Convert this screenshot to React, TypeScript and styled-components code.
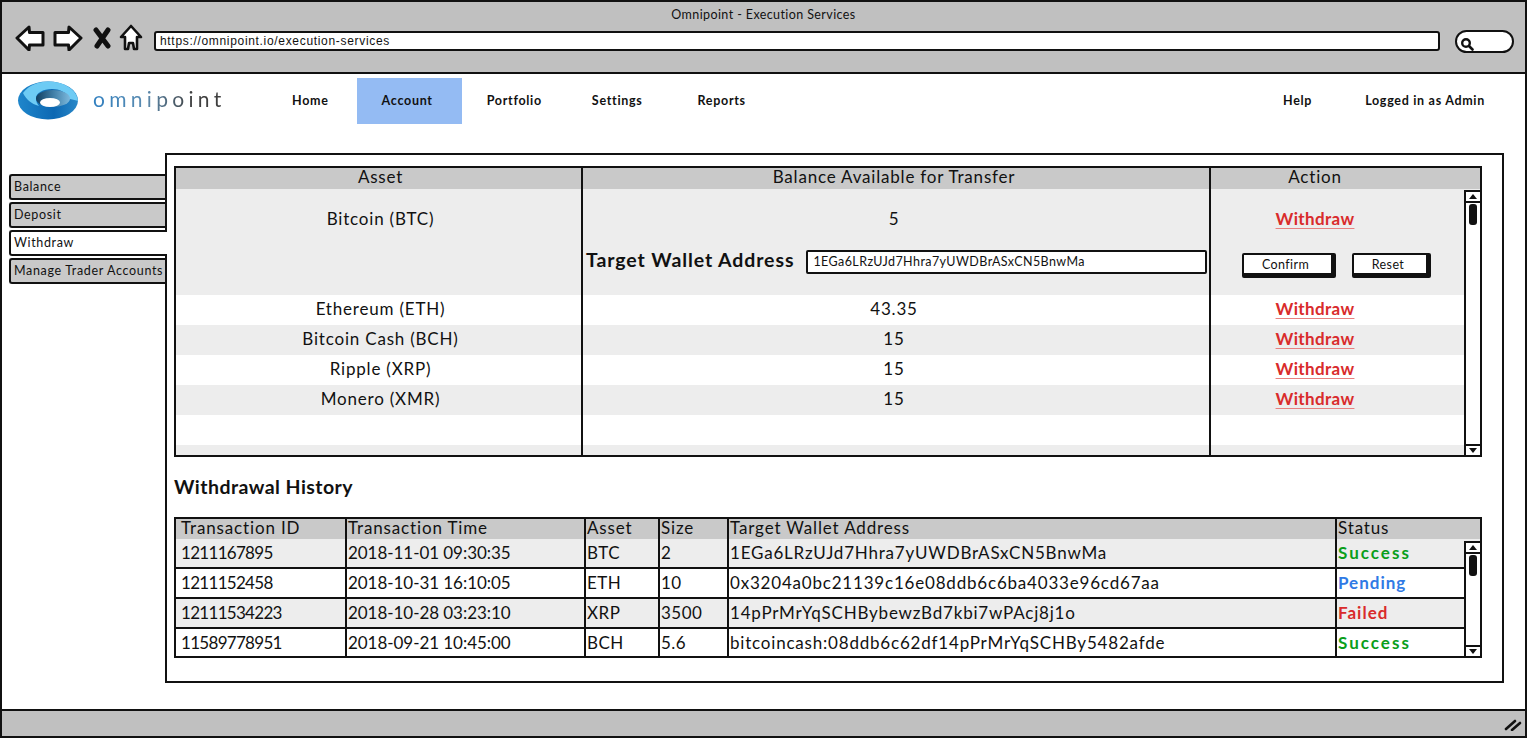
import styled, { createGlobalStyle } from "styled-components";

const GlobalStyle = createGlobalStyle`
  html, body {
    margin: 0;
    padding: 0;
    background: #fff;
    overflow: hidden;
  }
  * {
    box-sizing: border-box;
  }
`;

const font = `Lato, "Open Sans", sans-serif`;

const Frame = styled.div`
  width: 1527px;
  height: 738px;
  border: 2px solid #111;
  display: flex;
  flex-direction: column;
  font-family: ${font};
  color: #111;
  background: #fff;
`;

const Chrome = styled.header`
  height: 72px;
  flex: none;
  background: #c0c0c0;
  border-bottom: 2px solid #111;
  display: flex;
  flex-direction: column;
`;

const WindowTitle = styled.div`
  height: 24px;
  padding-top: 5px;
  text-align: center;
  font-size: 12.5px;
  line-height: 16px;
  letter-spacing: 0.4px;
`;

const Toolbar = styled.div`
  display: flex;
  align-items: center;
  padding: 2px 11px 0 13px;
  height: 28px;
`;

const IconSlot = styled.svg<{ $gap: number }>`
  flex: none;
  margin-right: ${(p) => p.$gap}px;
  margin-bottom: 6px;
  display: block;
`;

const UrlBar = styled.div`
  width: 1286px;
  height: 20px;
  margin-right: 15px;
  background: #fff;
  border: 2px solid #111;
  border-radius: 3px;
  padding-left: 4px;
  font-family: "Liberation Sans", Arial, sans-serif;
  font-size: 12px;
  line-height: 16px;
  letter-spacing: 0.68px;
`;

const SearchPill = styled.div`
  width: 59px;
  height: 23px;
  background: #fff;
  border: 2px solid #111;
  border-radius: 12px;
  padding: 3px 0 0 3px;
`;

const Nav = styled.nav`
  height: 46px;
  margin-top: 4px;
  flex: none;
  display: flex;
  align-items: center;
  padding-left: 15px;
  padding-right: 15px;
`;

const Logo = styled.div`
  display: flex;
  align-items: center;
  width: 250px;
  gap: 12px;
`;

const LogoText = styled.span`
  font-size: 21px;
  font-weight: 400;
  letter-spacing: 4.3px;
  margin-top: -6px;
  background: linear-gradient(90deg, #2f7fc0, #5d8cb0 40%, #3f3f3f 75%);
  -webkit-background-clip: text;
  background-clip: text;
  color: transparent;
`;

const NavItem = styled.a<{ $active?: boolean; $after: number }>`
  height: 46px;
  padding: 0 ${(p) => (p.$active ? 29 : 25)}px 1px 25px;
  display: flex;
  align-items: center;
  font-size: 12.5px;
  font-weight: 700;
  letter-spacing: 0.7px;
  background: ${(p) => (p.$active ? "#94bbf3" : "transparent")};
  margin-right: ${(p) => p.$after}px;
`;

const NavRight = styled.div`
  margin-left: auto;
  display: flex;
  align-items: center;
  gap: 53px;
  padding: 0 25px 1px 0;
  font-size: 12.5px;
  font-weight: 700;
  letter-spacing: 0.7px;
`;

const Workspace = styled.main`
  flex: 1;
  display: flex;
  padding: 29px 22px 26px 7px;
`;

const Sidebar = styled.aside`
  width: 158px;
  flex: none;
  margin-top: 21px;
  display: flex;
  flex-direction: column;
  gap: 2px;
`;

const SideTab = styled.div<{ $active?: boolean }>`
  height: 26px;
  padding-left: 3px;
  border: 2px solid #111;
  border-radius: 3px 0 0 3px;
  border-right: none;
  background: ${(p) => (p.$active ? "#fff" : "#c9c9c9")};
  font-size: 12.5px;
  line-height: 22px;
  letter-spacing: 0.65px;
  white-space: nowrap;
  position: relative;
  z-index: ${(p) => (p.$active ? 2 : 0)};
`;

const Panel = styled.section`
  flex: 1;
  margin-left: -2px;
  border: 2px solid #111;
  background: #fff;
  padding: 11px 20px 0 7px;
  position: relative;
  z-index: 1;
`;

const TableFrame = styled.div<{ $height: number }>`
  position: relative;
  height: ${(p) => p.$height}px;
  border: 2px solid #111;
  overflow: hidden;
`;

const Table = styled.table`
  width: 100%;
  table-layout: fixed;
  border-collapse: separate;
  border-spacing: 0;
`;

const AssetHead = styled.th`
  height: 21px;
  padding: 0 0 4px;
  background: #c9c9c9;
  font-size: 17px;
  font-weight: 400;
  line-height: 16px;
  letter-spacing: 0.8px;
  text-align: center;
  & + & {
    border-left: 2px solid #111;
  }
  &:first-child {
    padding-left: 4px;
  }
  &:nth-child(2) {
    padding-right: 4px;
  }
  &:last-child {
    padding-right: 61px;
  }
`;

const AssetCell = styled.td<{ $height: number; $shade: boolean }>`
  height: ${(p) => p.$height}px;
  padding: 0 0 ${(p) => (p.$height === 30 ? 4 : 2)}px;
  background: ${(p) => (p.$shade ? "#ededed" : "#fff")};
  font-size: 17px;
  letter-spacing: 0.8px;
  text-align: center;
  vertical-align: middle;
  & + & {
    border-left: 2px solid #111;
  }
  &:first-child {
    padding-left: 4px;
  }
  &:nth-child(2) {
    padding-right: 4px;
  }
  &:last-child {
    padding-right: 61px;
  }
`;

const Withdraw = styled.a`
  color: #d92b2b;
  font-size: 17px;
  font-weight: 700;
  letter-spacing: 0.35px;
  text-decoration: underline;
  text-decoration-color: #e78080;
  text-underline-offset: 3px;
`;

const WalletRow = styled.div`
  display: flex;
  align-items: center;
  gap: 12px;
  margin-right: -4px;
  padding: 0 2px 18px 3px;
`;

const WalletLabel = styled.label`
  font-size: 19.5px;
  font-weight: 700;
  line-height: 20px;
  letter-spacing: 0.9px;
  white-space: nowrap;
  margin-bottom: 4px;
`;

const WalletInput = styled.div`
  flex: 1;
  height: 24px;
  background: #fff;
  border: 2px solid #111;
  border-radius: 2px;
  padding-left: 5px;
  font-size: 12.5px;
  line-height: 19px;
  letter-spacing: 0.42px;
  text-align: left;
`;

const ButtonRow = styled.div`
  display: flex;
  gap: 16px;
  padding: 0 0 11px 31px;
`;

const ActionButton = styled.button<{ $width: number }>`
  flex: none;
  width: ${(p) => p.$width}px;
  height: 25px;
  padding: 0 4px 0 0;
  background: #fff;
  border: 2px solid #111;
  border-width: 2px 5px 5px 2px;
  border-radius: 2px;
  font-family: ${font};
  font-size: 12.5px;
  letter-spacing: 0.4px;
  color: #111;
`;

const Scrollbar = styled.div<{ $top: number }>`
  position: absolute;
  top: ${(p) => p.$top}px;
  right: 0;
  bottom: 0;
  width: 16px;
  background: #fff;
  border: 2px solid #111;
  border-right: none;
  border-bottom: none;
  display: flex;
  flex-direction: column;
`;

const ScrollArrow = styled.div<{ $down?: boolean }>`
  height: 11px;
  flex: none;
  display: flex;
  align-items: center;
  justify-content: center;
  border-${(p) => (p.$down ? "top" : "bottom")}: 2px solid #111;
  margin-${(p) => (p.$down ? "top" : "bottom")}: ${(p) => (p.$down ? "auto" : "1px")};
  &::before {
    content: "";
    border-left: 4px solid transparent;
    border-right: 4px solid transparent;
    border-${(p) => (p.$down ? "top" : "bottom")}: 5px solid #111;
  }
`;

const ScrollThumb = styled.div`
  width: 8px;
  height: 21px;
  margin-left: 3px;
  background: #111;
  border-radius: 3px;
`;

const HistoryTitle = styled.h2`
  margin: 18px 0 18px;
  font-size: 19.5px;
  font-weight: 700;
  line-height: 24px;
  letter-spacing: 0.45px;
`;

const HistoryHead = styled.th`
  height: 20px;
  padding: 0 0 4px 5px;
  background: #c9c9c9;
  font-size: 17px;
  font-weight: 400;
  line-height: 15px;
  letter-spacing: 0.85px;
  text-align: left;
  white-space: nowrap;
  & + & {
    border-left: 2px solid #111;
    padding-left: 1px;
  }
`;

const HistoryCell = styled.td<{ $shade: boolean; $last: boolean; $spacing: number }>`
  height: ${(p) => (p.$last ? 27 : 30)}px;
  padding: 0 0 ${(p) => (p.$last ? 0 : 2)}px 5px;
  background: ${(p) => (p.$shade ? "#ededed" : "#fff")};
  border-bottom: ${(p) => (p.$last ? "none" : "2px solid #111")};
  font-size: 17px;
  letter-spacing: ${(p) => p.$spacing}px;
  white-space: nowrap;
  overflow: hidden;
  & + & {
    border-left: 2px solid #111;
    padding-left: 1px;
  }
`;

const Status = styled.span<{ $color: string; $spacing: number }>`
  color: ${(p) => p.$color};
  font-weight: 700;
  letter-spacing: ${(p) => p.$spacing}px;
`;

const BottomBar = styled.footer`
  height: 27px;
  flex: none;
  background: #c0c0c0;
  border-top: 2px solid #111;
  display: flex;
  justify-content: flex-end;
  align-items: center;
  padding-right: 3px;
`;

const statusStyles: Record<string, { color: string; spacing: number }> = {
  Success: { color: "#0a9e1b", spacing: 2 },
  Pending: { color: "#2f7ae5", spacing: 1 },
  Failed: { color: "#d92b2b", spacing: 1 }
};

const assets = [
  { name: "Ethereum (ETH)", balance: "43.35" },
  { name: "Bitcoin Cash (BCH)", balance: "15" },
  { name: "Ripple (XRP)", balance: "15" },
  { name: "Monero (XMR)", balance: "15" }
];

const history = [
  ["1211167895", "2018-11-01 09:30:35", "BTC", "2", "1EGa6LRzUJd7Hhra7yUWDBrASxCN5BnwMa", "Success"],
  ["1211152458", "2018-10-31 16:10:05", "ETH", "10", "0x3204a0bc21139c16e08ddb6c6ba4033e96cd67aa", "Pending"],
  ["12111534223", "2018-10-28 03:23:10", "XRP", "3500", "14pPrMrYqSCHBybewzBd7kbi7wPAcj8j1o", "Failed"],
  ["11589778951", "2018-09-21 10:45:00", "BCH", "5.6", "bitcoincash:08ddb6c62df14pPrMrYqSCHBy5482afde", "Success"]
];

const historyColumns = [
  { label: "Transaction ID", width: 169, spacing: -0.7 },
  { label: "Transaction Time", width: 239, spacing: -0.05 },
  { label: "Asset", width: 74, spacing: 0.5 },
  { label: "Size", width: 69, spacing: 0.5 },
  { label: "Target Wallet Address", width: 608, spacing: 0.8 },
  { label: "Status", width: 145, spacing: 1 }
];

function ScrollBar({ top }: { top: number }) {
  return (
    <Scrollbar $top={top}>
      <ScrollArrow />
      <ScrollThumb />
      <ScrollArrow $down />
    </Scrollbar>
  );
}

function App() {
  return (
    <>
      <GlobalStyle />
      <Frame>
        <Chrome>
          <WindowTitle>Omnipoint - Execution Services</WindowTitle>
          <Toolbar>
            <IconSlot $gap={8} width="30" height="26" viewBox="0 0 30 26">
              <path d="M2 13 L14 2 L14.500 7.500 L28 7.500 L28 20 L14.500 20 L14 25 Z" fill="#fff" stroke="#111" strokeWidth="3" strokeLinejoin="round" />
            </IconSlot>
            <IconSlot $gap={10} width="30" height="26" viewBox="0 0 30 26">
              <path d="M28 13 L16 2 L15.500 7.500 L2 7.500 L2 20 L15.500 20 L16 25 Z" fill="#fff" stroke="#111" strokeWidth="3" strokeLinejoin="round" />
            </IconSlot>
            <IconSlot $gap={7} width="19" height="22" viewBox="0 0 19 22">
              <path d="M3 3 L15 19 M15 3 L4 19" fill="none" stroke="#111" strokeWidth="5" strokeLinecap="round" />
            </IconSlot>
            <IconSlot $gap={11} width="24" height="28" viewBox="0 0 24 28">
              <path d="M12 2 L22 13 L18 13 L18 25 L15 25 L14 19 L10 19 L9 25 L6 25 L6 13 L2 13 Z" fill="#fff" stroke="#111" strokeWidth="2.6" strokeLinejoin="round" />
            </IconSlot>
            <UrlBar>https://omnipoint.io/execution-services</UrlBar>
            <SearchPill>
              <svg width="14" height="14" viewBox="0 0 14 14">
                <circle cx="6" cy="6" r="3.8" fill="none" stroke="#111" strokeWidth="2.4" />
                <path d="M9 9 L12.5 12.5" stroke="#111" strokeWidth="2.6" strokeLinecap="round" />
              </svg>
            </SearchPill>
          </Toolbar>
        </Chrome>
        <Nav>
          <Logo>
            <svg width="64" height="40" viewBox="0 0 64 40">
              <defs>
                <linearGradient id="ringBody" x1="0" y1="0" x2="1" y2="0">
                  <stop offset="0" stopColor="#1f86cb" />
                  <stop offset="0.6" stopColor="#0c68b3" />
                  <stop offset="1" stopColor="#2a88c8" />
                </linearGradient>
                <linearGradient id="ringHole" x1="0" y1="0" x2="1" y2="0">
                  <stop offset="0" stopColor="#123f61" />
                  <stop offset="0.5" stopColor="#3f7da6" />
                  <stop offset="1" stopColor="#7db9dd" />
                </linearGradient>
              </defs>
              <ellipse cx="31" cy="19.5" rx="30" ry="19" fill="url(#ringBody)" />
              <path d="M6 12 C12 4 22 0.500 31 0.500 C48 0.500 60 9 61 20 C59 19 56 19 53 18 C50 11 42 8 35 8 C26 8 19 12 19 17 C19 20 20 23 22 25 C14 23 9 18 6 12 Z" fill="#6ecbf4" />
              <ellipse cx="36" cy="17.500" rx="17" ry="8.500" fill="url(#ringHole)" />
              <ellipse cx="33" cy="21.500" rx="10" ry="4.500" fill="#fff" />
            </svg>
            <LogoText>omnipoint</LogoText>
          </Logo>
          <NavItem $after={3}>Home</NavItem>
          <NavItem $active $after={0}>Account</NavItem>
          <NavItem $after={0}>Portfolio</NavItem>
          <NavItem $after={5}>Settings</NavItem>
          <NavItem $after={0}>Reports</NavItem>
          <NavRight>
            <span>Help</span>
            <span>Logged in as Admin</span>
          </NavRight>
        </Nav>
        <Workspace>
          <Sidebar>
            <SideTab>Balance</SideTab>
            <SideTab>Deposit</SideTab>
            <SideTab $active>Withdraw</SideTab>
            <SideTab>Manage Trader Accounts</SideTab>
          </Sidebar>
          <Panel>
            <TableFrame $height={291}>
              <Table>
                <colgroup>
                  <col style={{ width: 405 }} />
                  <col style={{ width: 628 }} />
                  <col />
                </colgroup>
                <thead>
                  <tr>
                    <AssetHead>Asset</AssetHead>
                    <AssetHead>Balance Available for Transfer</AssetHead>
                    <AssetHead>Action</AssetHead>
                  </tr>
                </thead>
                <tbody>
                  <tr>
                    <AssetCell $height={60} $shade>Bitcoin (BTC)</AssetCell>
                    <AssetCell $height={60} $shade>5</AssetCell>
                    <AssetCell $height={60} $shade>
                      <Withdraw>Withdraw</Withdraw>
                    </AssetCell>
                  </tr>
                  <tr>
                    <AssetCell $height={46} $shade />
                    <AssetCell $height={46} $shade>
                      <WalletRow>
                        <WalletLabel>Target Wallet Address</WalletLabel>
                        <WalletInput>1EGa6LRzUJd7Hhra7yUWDBrASxCN5BnwMa</WalletInput>
                      </WalletRow>
                    </AssetCell>
                    <AssetCell $height={46} $shade>
                      <ButtonRow>
                        <ActionButton $width={94}>Confirm</ActionButton>
                        <ActionButton $width={79}>Reset</ActionButton>
                      </ButtonRow>
                    </AssetCell>
                  </tr>
                  {assets.map((asset, i) => (
                    <tr key={asset.name}>
                      <AssetCell $height={30} $shade={i % 2 === 1}>{asset.name}</AssetCell>
                      <AssetCell $height={30} $shade={i % 2 === 1}>{asset.balance}</AssetCell>
                      <AssetCell $height={30} $shade={i % 2 === 1}>
                        <Withdraw>Withdraw</Withdraw>
                      </AssetCell>
                    </tr>
                  ))}
                  <tr>
                    <AssetCell $height={30} $shade={false} />
                    <AssetCell $height={30} $shade={false} />
                    <AssetCell $height={30} $shade={false} />
                  </tr>
                  <tr>
                    <AssetCell $height={10} $shade />
                    <AssetCell $height={10} $shade />
                    <AssetCell $height={10} $shade />
                  </tr>
                </tbody>
              </Table>
              <ScrollBar top={22} />
            </TableFrame>
            <HistoryTitle>Withdrawal History</HistoryTitle>
            <TableFrame $height={141}>
              <Table>
                <colgroup>
                  {historyColumns.map((c) => (
                    <col key={c.label} style={{ width: c.width }} />
                  ))}
                </colgroup>
                <thead>
                  <tr>
                    {historyColumns.map((c) => (
                      <HistoryHead key={c.label}>{c.label}</HistoryHead>
                    ))}
                  </tr>
                </thead>
                <tbody>
                  {history.map((row, i) => (
                    <tr key={row[0]}>
                      {row.map((value, j) => (
                        <HistoryCell
                          key={j}
                          $shade={i % 2 === 0}
                          $last={i === history.length - 1}
                          $spacing={historyColumns[j].spacing}
                        >
                          {j === 5 ? (
                            <Status $color={statusStyles[value].color} $spacing={statusStyles[value].spacing}>
                              {value}
                            </Status>
                          ) : (
                            value
                          )}
                        </HistoryCell>
                      ))}
                    </tr>
                  ))}
                </tbody>
              </Table>
              <ScrollBar top={22} />
            </TableFrame>
          </Panel>
        </Workspace>
        <BottomBar>
          <svg width="18" height="14" viewBox="0 0 18 14">
            <path d="M2 12 L11 4 M8 13 L16 6" stroke="#111" strokeWidth="2.6" strokeLinecap="round" />
          </svg>
        </BottomBar>
      </Frame>
    </>
  );
}

export default App;
